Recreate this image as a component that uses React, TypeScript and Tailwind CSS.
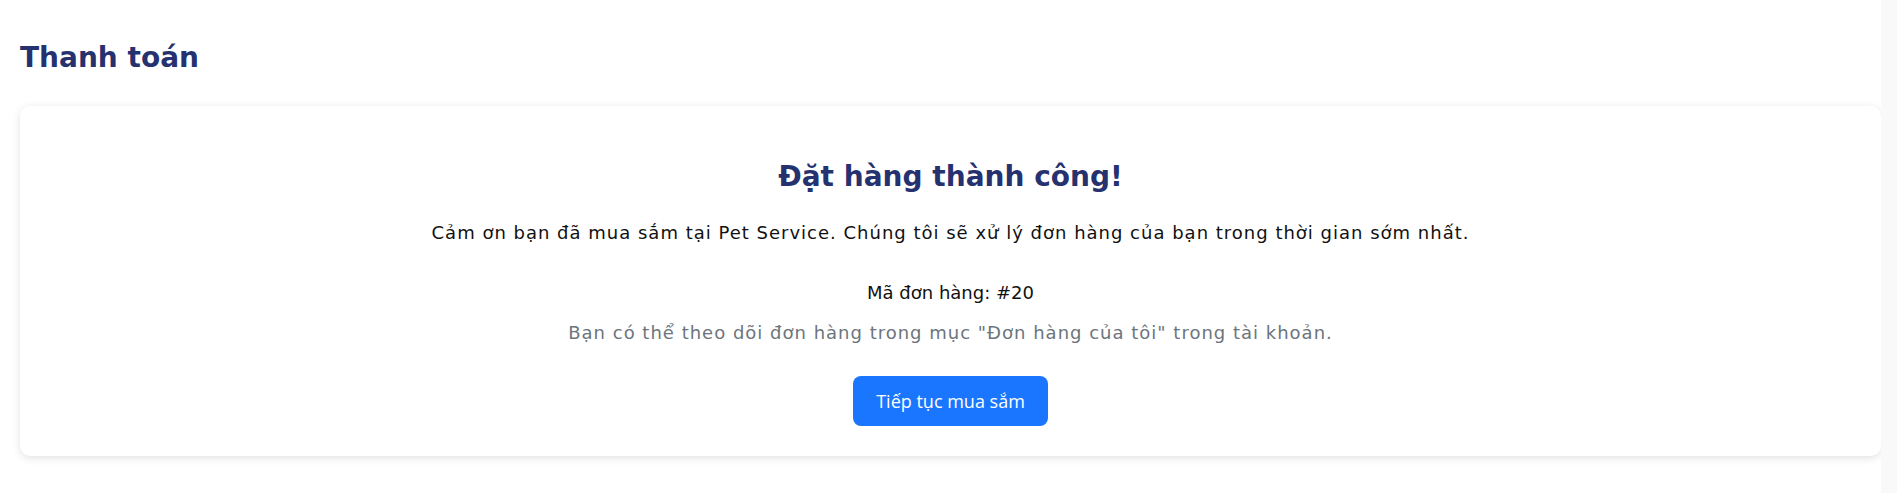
export default function App() {
  return (
    <div className="flex min-h-[493px] w-full bg-white font-['DejaVu_Sans','Noto_Sans',sans-serif]">
      <main className="flex-1 pl-5 pt-[41px]">
        <h1 className="text-[28px] font-bold leading-[34px] text-[#26316f]">Thanh toán</h1>

        {/* Success card */}
        <div className="mt-[31px] flex flex-col items-center rounded-[10px] bg-white pt-[54px] pb-[30px] text-center shadow-[0_2px_8px_rgba(0,0,0,0.12)]">
          <h2 className="text-[28px] font-bold leading-[34px] text-[#26316f]">Đặt hàng thành công!</h2>
          <p className="mt-[25px] text-[18px] leading-[27px] tracking-[1px] text-[#111]">
            Cảm ơn bạn đã mua sắm tại Pet Service. Chúng tôi sẽ xử lý đơn hàng của bạn trong thời gian sớm nhất.
          </p>
          <p className="mt-[33px] text-[18px] font-medium leading-[27px] text-[#111]">Mã đơn hàng: #20</p>
          <p className="mt-[13px] text-[18px] leading-[27px] tracking-[1px] text-[#6c757d]">
            Bạn có thể theo dõi đơn hàng trong mục "Đơn hàng của tôi" trong tài khoản.
          </p>
          <button className="mt-[30px] h-[50px] rounded-lg bg-[#1a76ff] px-[23px] font-['Open_Sans',sans-serif] text-[18px] text-white">
            Tiếp tục mua sắm
          </button>
        </div>
      </main>
      <aside className="w-4 bg-[#f9f9f9]" />
    </div>
  )
}
